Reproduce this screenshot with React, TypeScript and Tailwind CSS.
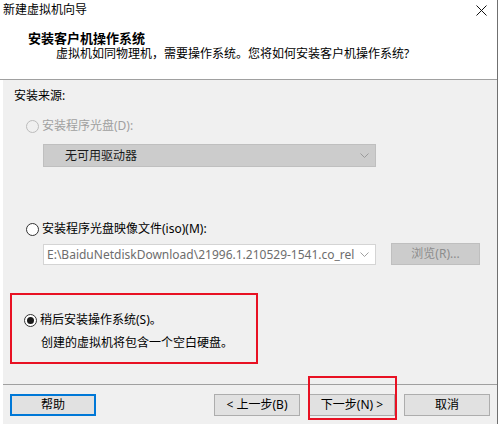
const font = { fontFamily: '"Noto Sans", "Noto Sans CJK SC", sans-serif' };

function Radio({ state }: { state: 'disabled' | 'off' | 'on' }) {
  const ring =
    state === 'disabled' ? 'border-[#bcbcbc] bg-[#f0f0f0]' : 'border-[#333333] bg-white';
  return (
    <span className={`flex h-[13px] w-[13px] shrink-0 items-center justify-center rounded-full border ${ring}`}>
      {state === 'on' && <span className="h-[7px] w-[7px] rounded-full bg-[#1a1a1a]" />}
    </span>
  );
}

function Chevron({ color }: { color: string }) {
  return (
    <svg width="9" height="5" viewBox="0 0 9 5" className="shrink-0">
      <path d="M0.5 0.5 L4.5 4.5 L8.5 0.5" fill="none" stroke={color} strokeWidth="1" />
    </svg>
  );
}

function Button({ label, focused = false }: { label: string; focused?: boolean }) {
  return (
    <button
      type="button"
      className={`flex h-[22px] w-[86px] items-center justify-center bg-[#e1e1e1] text-[12px] leading-none text-black ${
        focused ? 'border-2 border-[#0078d7]' : 'border border-[#adadad]'
      }`}
    >
      {label}
    </button>
  );
}

export default function App() {
  return (
    <div className="relative h-[426px] w-[499px] overflow-hidden bg-white text-[12px] text-black" style={font}>
      <div className="flex h-[424px] w-[498px] flex-col border-r border-[#707070]">
        {/* title bar */}
        <div className="flex h-[20px] items-start justify-between pl-[3px] pr-[10px] pt-[2px]">
          <span className="leading-[16px]">新建虚拟机向导</span>
          <svg width="11" height="11" viewBox="0 0 11 11" className="mt-[3px]">
            <path d="M0.5 0.5 L10.5 10.5 M10.5 0.5 L0.5 10.5" stroke="#111" strokeWidth="1" />
          </svg>
        </div>

        {/* header */}
        <div className="mt-[10px] pl-[28px] text-[13px] font-bold leading-[16px]">安装客户机操作系统</div>
        <div className="pl-[56px] leading-[16px]">虚拟机如同物理机，需要操作系统。您将如何安装客户机操作系统?</div>
        <div className="mt-[17px] h-px bg-[#a0a0a0]" />

        {/* body */}
        <div className="ml-[3px] flex flex-1 flex-col bg-[#f0f0f0] pt-[8px]">
          <div className="pl-[11px] leading-[16px]">安装来源:</div>

          <div className="mt-[14px] flex h-[16px] items-center gap-[3px] pl-[23px] text-[#a0a0a0]">
            <Radio state="disabled" />
            <span className="leading-[16px]">安装程序光盘(D):</span>
          </div>
          <div className="ml-[40px] mt-[10px] flex h-[23px] w-[333px] items-center justify-between border border-[#bfbfbf] bg-[#cccccc] pl-[21px] pr-[6px]">
            <span className="leading-none text-[#1a1a1a]">无可用驱动器</span>
            <Chevron color="#9a9a9a" />
          </div>

          <div className="mt-[54px] flex h-[16px] items-center gap-[3px] pl-[23px]">
            <Radio state="off" />
            <span className="leading-[16px]">安装程序光盘映像文件(iso)(M):</span>
          </div>
          <div className="ml-[40px] mt-[6px] flex items-start gap-[15px]">
            <div className="mt-[1px] flex h-[21px] w-[333px] items-center border border-[#d4d4d4] bg-white pr-[6px]">
              <span className="w-[310px] shrink-0 overflow-hidden whitespace-nowrap pl-[3px] leading-none text-[#6d6d6d]">
                E:\BaiduNetdiskDownload\21996.1.210529-1541.co_rele
              </span>
              <span className="flex flex-1 justify-end">
                <Chevron color="#a0a0a0" />
              </span>
            </div>
            <div className="flex h-[22px] w-[89px] shrink-0 items-center justify-center border border-[#bfbfbf] bg-[#cccccc] leading-none text-[#8d8d8d]">
              浏览(R)...
            </div>
          </div>

          <div className="ml-[7px] mt-[28px] flex h-[71px] w-[248px] flex-col border-2 border-[#e81123] pt-[17px]">
            <div className="flex h-[16px] items-center gap-[3px] pl-[12px]">
              <Radio state="on" />
              <span className="leading-[16px]">稍后安装操作系统(S)。</span>
            </div>
            <div className="mt-[7px] pl-[29px] leading-[16px]">创建的虚拟机将包含一个空白硬盘。</div>
          </div>

          <div className="mt-[20px] h-px bg-[#a0a0a0]" />

          <div className="mt-[9px] flex items-center pl-[7px] pr-[7px]">
            <Button label="帮助" focused />
            <div className="flex-1" />
            <div className="flex gap-[9px]">
              <Button label="< 上一步(B)" />
              <div className="relative">
                <Button label="下一步(N) >" />
                <div className="pointer-events-none absolute left-[-1px] top-[-18px] h-[44px] w-[89px] border-2 border-[#e81123]" />
              </div>
              <Button label="取消" />
            </div>
          </div>
        </div>
      </div>
    </div>
  );
}
